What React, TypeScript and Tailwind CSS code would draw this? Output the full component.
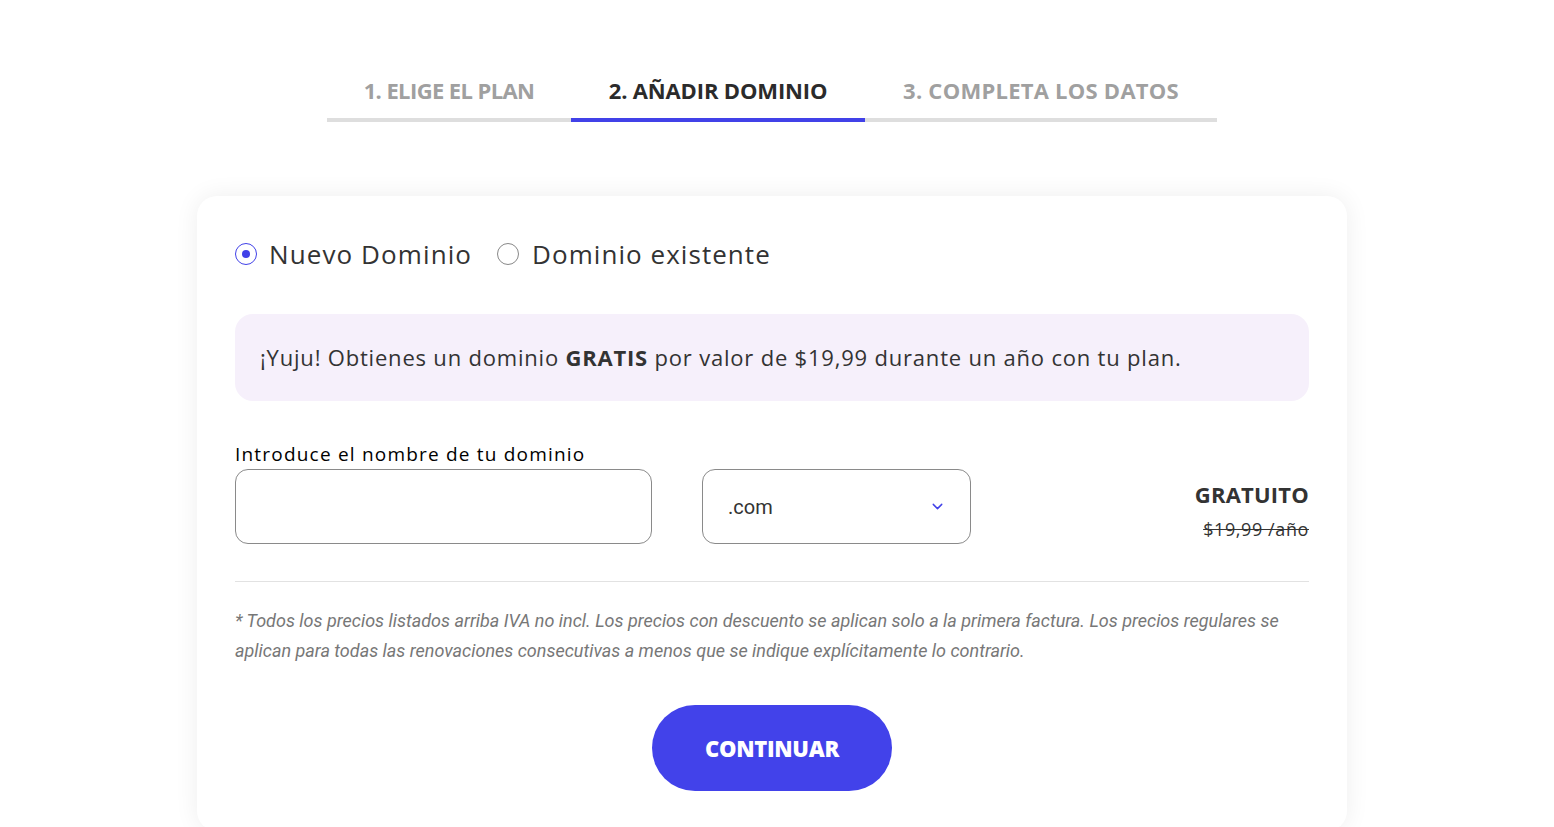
import React from "react";
import { ChevronDown } from "lucide-react";

export default function App() {
  const head = { fontFamily: '"Open Sans", "Noto Sans", sans-serif' };
  const rob = { fontFamily: 'Roboto, "Liberation Sans", sans-serif' };
  return (
    <div className="min-h-screen bg-white flex flex-col items-center pr-[10px]" style={head}>
      <div className="flex mt-[75px]">
        <div className="w-[244px] text-center text-[22px] leading-[30px] font-bold text-[#a0a0a0] pb-[13px] border-b-4 border-[#dedede] tracking-[-0.6px]">
          1. ELIGE EL PLAN
        </div>
        <div className="w-[294px] text-center text-[22px] leading-[30px] font-bold text-[#2b2b2b] pb-[13px] border-b-4 border-[#4141e8] tracking-[-0.15px]">
          2. AÑADIR DOMINIO
        </div>
        <div className="w-[352px] text-center text-[22px] leading-[30px] font-bold text-[#a0a0a0] pb-[13px] border-b-4 border-[#dedede] tracking-[0.25px]">
          3. COMPLETA LOS DATOS
        </div>
      </div>

      <div className="w-[1150px] mt-[74px] bg-white rounded-[20px] shadow-[0_0_24px_rgba(0,0,0,0.07)] px-[38px] pt-[40px] pb-[40px]">
        <div className="flex items-center h-[36px]">
          <span className="w-[22px] h-[22px] rounded-full border border-[#4141e8] flex items-center justify-center">
            <span className="w-[8px] h-[8px] rounded-full bg-[#4141e8]" />
          </span>
          <span className="ml-[12px] text-[26px] text-[#333] leading-[36px] tracking-[1.1px]">Nuevo Dominio</span>
          <span className="ml-[25px] w-[22px] h-[22px] rounded-full border border-[#888]" />
          <span className="ml-[13px] text-[26px] text-[#333] leading-[36px] tracking-[1.05px]">Dominio existente</span>
        </div>

        <div className="mt-[42px] h-[87px] rounded-[18px] bg-[#f6f0fb] flex items-center px-[25px] text-[22px] text-[#333] tracking-[0.8px]">
          <span>
            ¡Yuju! Obtienes un dominio <b className="font-bold">GRATIS</b> por valor de $19,99 durante un año con tu plan.
          </span>
        </div>

        <div className="mt-[41px] text-[19px] leading-[24px] font-medium text-black tracking-[1.2px]">
          Introduce el nombre de tu dominio
        </div>
        <div className="mt-[3px] flex items-start">
          <div className="w-[417px] h-[75px] rounded-[13px] border border-[#8a8a8a]" />
          <div className="ml-[50px] w-[269px] h-[75px] rounded-[13px] border border-[#8a8a8a] flex items-center justify-between pl-[25px] pr-[24px]" style={rob}>
            <span className="text-[20px] text-[#333]">.com</span>
            <ChevronDown size={17} strokeWidth={2} color="#4141e8" />
          </div>
          <div className="flex-1 flex flex-col items-end pt-[10px]">
            <span className="text-[22px] font-bold text-[#333] leading-[30px] tracking-[0.2px]">GRATUITO</span>
            <span className="mt-[8px] text-[18px] text-[#333] line-through leading-[24px] tracking-[0.6px]">$19,99 /año</span>
          </div>
        </div>

        <div className="mt-[37px] h-px bg-[#e2e2e2]" />

        <p className="mt-[24px] text-[18px] leading-[30px] italic text-[#777]" style={rob}>
          * Todos los precios listados arriba IVA no incl. Los precios con descuento se aplican solo a la primera factura. Los precios regulares se aplican para todas las renovaciones consecutivas a menos que se indique explícitamente lo contrario.
        </p>

        <div className="mt-[39px] flex justify-center">
          <button className="w-[240px] h-[86px] rounded-full bg-[#4242ea] text-white text-[22px] font-extrabold tracking-[-0.3px]">
            CONTINUAR
          </button>
        </div>
      </div>
    </div>
  );
}
